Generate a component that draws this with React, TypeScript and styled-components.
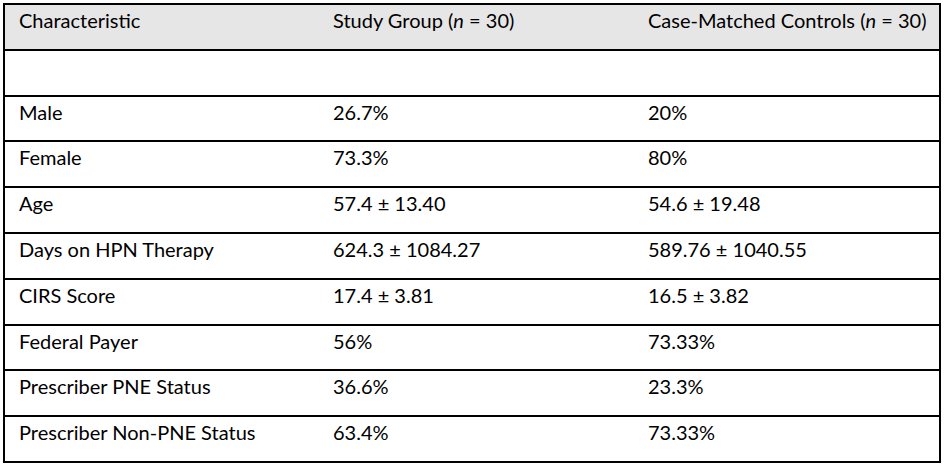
import React from 'react';
import styled, { createGlobalStyle } from 'styled-components';

const GlobalStyle = createGlobalStyle`
  body {
    margin: 0;
    background: #ffffff;
    font-family: Lato, "Liberation Sans", sans-serif;
    color: #000000;
  }
`;

const Page = styled.div`
  padding: 3px 0 0 3px;
`;

const Table = styled.table`
  width: 938px;
  border-collapse: collapse;
  border: 2px solid #000;
  table-layout: fixed;
  font-size: 20px;
`;

const Row = styled.tr<{ $head?: boolean }>`
  height: 45.8px;
  border-bottom: 2px solid #000;
  background: ${(p) => (p.$head ? '#e7e6e6' : '#ffffff')};
`;

const Cell = styled.td`
  vertical-align: top;
  padding: 4px 0 0 14px;
  line-height: 23px;
  white-space: nowrap;
`;

const HeadCell = styled(Cell).attrs({ as: 'th' })`
  font-weight: normal;
  text-align: left;
`;

const rows: [string, string, string][] = [
  ['Male', '26.7%', '20%'],
  ['Female', '73.3%', '80%'],
  ['Age', '57.4 ± 13.40', '54.6 ± 19.48'],
  ['Days on HPN Therapy', '624.3 ± 1084.27', '589.76 ± 1040.55'],
  ['CIRS Score', '17.4 ± 3.81', '16.5 ± 3.82'],
  ['Federal Payer', '56%', '73.33%'],
  ['Prescriber PNE Status', '36.6%', '23.3%'],
  ['Prescriber Non-PNE Status', '63.4%', '73.33%'],
];

export default function App() {
  return (
    <Page>
      <GlobalStyle />
      <Table>
        <colgroup>
          <col style={{ width: 315 }} />
          <col style={{ width: 315 }} />
          <col />
        </colgroup>
        <thead>
          <Row $head>
            <HeadCell>Characteristic</HeadCell>
            <HeadCell>
              Study Group (<i>n</i> = 30)
            </HeadCell>
            <HeadCell>
              Case-Matched Controls (<i>n</i> = 30)
            </HeadCell>
          </Row>
        </thead>
        <tbody>
          <Row>
            <Cell />
            <Cell />
            <Cell />
          </Row>
          {rows.map(([label, study, control]) => (
            <Row key={label}>
              <Cell>{label}</Cell>
              <Cell>{study}</Cell>
              <Cell>{control}</Cell>
            </Row>
          ))}
        </tbody>
      </Table>
    </Page>
  );
}
